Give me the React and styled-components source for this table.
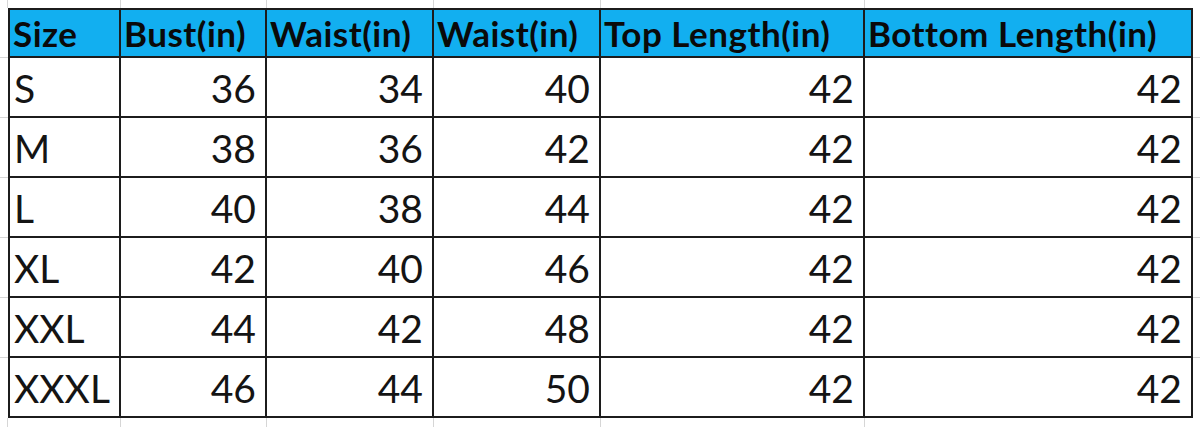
import styled, { createGlobalStyle } from 'styled-components'

const GlobalStyle = createGlobalStyle`
  html, body {
    margin: 0;
    padding: 0;
    background: #ffffff;
  }
  body {
    font-family: Lato, "Liberation Sans", sans-serif;
    color: #111111;
  }
`;

const columns = [113, 146, 167, 167, 264, 328];

const headers = ['Size', 'Bust(in)', 'Waist(in)', 'Waist(in)', 'Top Length(in)', 'Bottom Length(in)'];

const rows = [
    ['S', 36, 34, 40, 42, 42],
    ['M', 38, 36, 42, 42, 42],
    ['L', 40, 38, 44, 42, 42],
    ['XL', 42, 40, 46, 42, 42],
    ['XXL', 44, 42, 48, 42, 42],
    ['XXXL', 46, 44, 50, 42, 42],
];

const Sheet = styled.div`
  display: grid;
  grid-template-columns: 8px ${columns.map((c) => c + 'px').join(' ')} 7px;
  grid-template-rows: 8px 50px repeat(6, 60px) 9px;
  width: 1200px;
  height: 427px;
  overflow: hidden;
`;

const Gutter = styled.div`
  box-sizing: border-box;
  border-right: ${(p) => (p.$vline ? '1px solid #d6d6d6' : 'none')};
  border-bottom: ${(p) => (p.$hline ? '1px solid #d6d6d6' : 'none')};
`;

const Cell = styled.div`
  box-sizing: border-box;
  display: flex;
  align-items: center;
  justify-content: ${(p) => (p.$num ? 'flex-end' : 'flex-start')};
  padding: 2px ${(p) => (p.$num ? '9px' : '0')} 0 ${(p) => (p.$num ? '0' : '4px')};
  border-right: 2px solid #1c1c1c;
  border-bottom: 2px solid #1c1c1c;
  border-left: ${(p) => (p.$first ? '2px solid #1c1c1c' : 'none')};
  border-top: ${(p) => (p.$top ? '2px solid #1c1c1c' : 'none')};
  white-space: nowrap;
`;

const HeadCell = styled(Cell)`
  background: #12aff0;
  font-weight: 700;
  font-size: 35px;
  letter-spacing: 0.5px;
  color: #0a0a0a;
  padding-left: 3px;
  padding-top: 0;
`;

const BodyCell = styled(Cell)`
  background: #ffffff;
  font-size: 39px;
  font-weight: 400;
  color: #141414;
`;

export default function App() {
    return (
        <>
            <GlobalStyle/>
            <Sheet>
                <Gutter $vline/>
                {columns.map((c, i) => (
                    <Gutter key={'t' + i} $vline={i < columns.length - 1}/>
                ))}
                <Gutter/>

                <Gutter $hline/>
                {headers.map((h, i) => (
                    <HeadCell key={'h' + i} $top $first={i === 0}>{h}</HeadCell>
                ))}
                <Gutter $hline/>

                {rows.map((r, ri) => (
                    <>
                        <Gutter key={'l' + ri} $hline={ri < rows.length - 1}/>
                        {r.map((v, ci) => (
                            <BodyCell key={ri + '-' + ci} $first={ci === 0} $num={ci > 0}>{v}</BodyCell>
                        ))}
                        <Gutter key={'r' + ri} $hline={ri < rows.length - 1}/>
                    </>
                ))}

                <Gutter $vline/>
                {columns.map((c, i) => (
                    <Gutter key={'b' + i} $vline={i < columns.length - 1}/>
                ))}
                <Gutter/>
            </Sheet>
        </>
    )
}
